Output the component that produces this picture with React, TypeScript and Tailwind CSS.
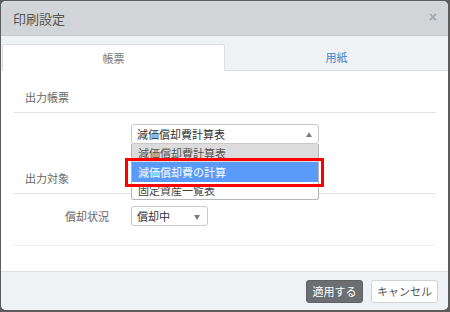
import React from 'react'

const jp = { fontFamily: '"Noto Sans CJK JP", "Noto Sans", sans-serif' }

export default function App() {
  return (
    <div className="w-[450px] h-[312px] bg-[#5c5c5c] p-px" style={jp}>
      <div className="relative w-[447px] h-[309px] rounded-[5px] bg-white overflow-hidden flex flex-col">
        {/* header */}
        <div className="h-[35px] shrink-0 bg-[#d2d5d8] flex items-center justify-between pl-[12px] pr-[11px] border-b border-[#c6c9cc]">
          <span className="text-[13px] text-[#555] leading-none">印刷設定</span>
          <span className="text-[14px] font-bold text-[#a3a6a9] leading-none mb-[3px]" style={{ fontFamily: '"Liberation Sans", sans-serif' }}>×</span>
        </div>

        {/* tabs */}
        <div className="h-[35px] shrink-0 bg-[#eef2f5] flex items-end pl-px">
          <div className="w-[223px] h-[27px] bg-white border border-b-0 border-[#dcdfe2] rounded-t-[3px] flex items-center justify-center text-[11px] text-[#777]">
            帳票
          </div>
          <div className="flex-1 h-[27px] border-b border-[#dcdfe2] flex items-center justify-center text-[11px] text-[#3a86c6]">
            用紙
          </div>
        </div>

        {/* content */}
        <div className="px-[12px]">
          <div className="border-b border-[#ececec] rounded-b-[4px] pb-[19px]">
            <div className="pt-[18px] pb-[7px] pl-3 text-[11px] leading-[16px] text-[#666] border-b border-[#e3e3e3]">
              出力帳票
            </div>
            <div className="pt-[11px] pl-[118px]">
              <div className="relative w-[188px]">
                <div className="h-[20px] border border-[#c8c8c8] rounded-[3px] flex items-center justify-between pl-[5px] pr-[6px] text-[11px] text-[#333]">
                  <span>減価償却費計算表</span>
                  <span className="text-[6px] text-[#777]">▲</span>
                </div>
                <div className="absolute left-0 top-[20px] w-[188px] bg-white border border-t-0 border-[#b5b5b5] rounded-b-[3px] z-10 text-[11px]">
                  <div className="h-[18px] bg-[#dcdcdc] text-[#555] pl-[6px] flex items-center">減価償却費計算表</div>
                  <div className="h-[20px] bg-[#5a9bfa] text-white pl-[6px] flex items-center">減価償却費の計算</div>
                  <div className="h-[17px] text-[#444] pl-[6px] flex items-center">固定資産一覧表</div>
                </div>
                <div className="absolute left-[-6px] top-[34px] w-[199px] h-[29px] border-[3px] border-[#ff0000] z-20" />
              </div>
            </div>
            <div className="pt-[26px] pb-[7px] pl-3 text-[11px] leading-[16px] text-[#666] border-b border-[#e3e3e3]">
              出力対象
            </div>
            <div className="pt-[12px] flex items-center">
              <span className="w-[96px] text-right text-[11px] text-[#666]">償却状況</span>
              <div className="ml-[22px] w-[77px] h-[20px] border border-[#c8c8c8] rounded-[3px] flex items-center justify-between pl-[5px] pr-[7px] text-[11px] text-[#333]">
                <span>償却中</span>
                <span className="text-[6px] text-[#777]">▼</span>
              </div>
            </div>
          </div>
        </div>

        {/* footer */}
        <div className="mt-auto h-[39px] bg-[#eef2f5] border-t border-[#dcdfe2] flex items-center justify-end gap-[8px] pr-[10px]">
          <button className="w-[57px] h-[23px] bg-[#6b6f72] border border-[#5e6265] rounded-[3px] text-white text-[11px]">
            適用する
          </button>
          <button className="w-[67px] h-[23px] bg-white border border-[#cfd2d5] rounded-[3px] text-[#555] text-[11px]">
            キャンセル
          </button>
        </div>
      </div>
    </div>
  )
}
